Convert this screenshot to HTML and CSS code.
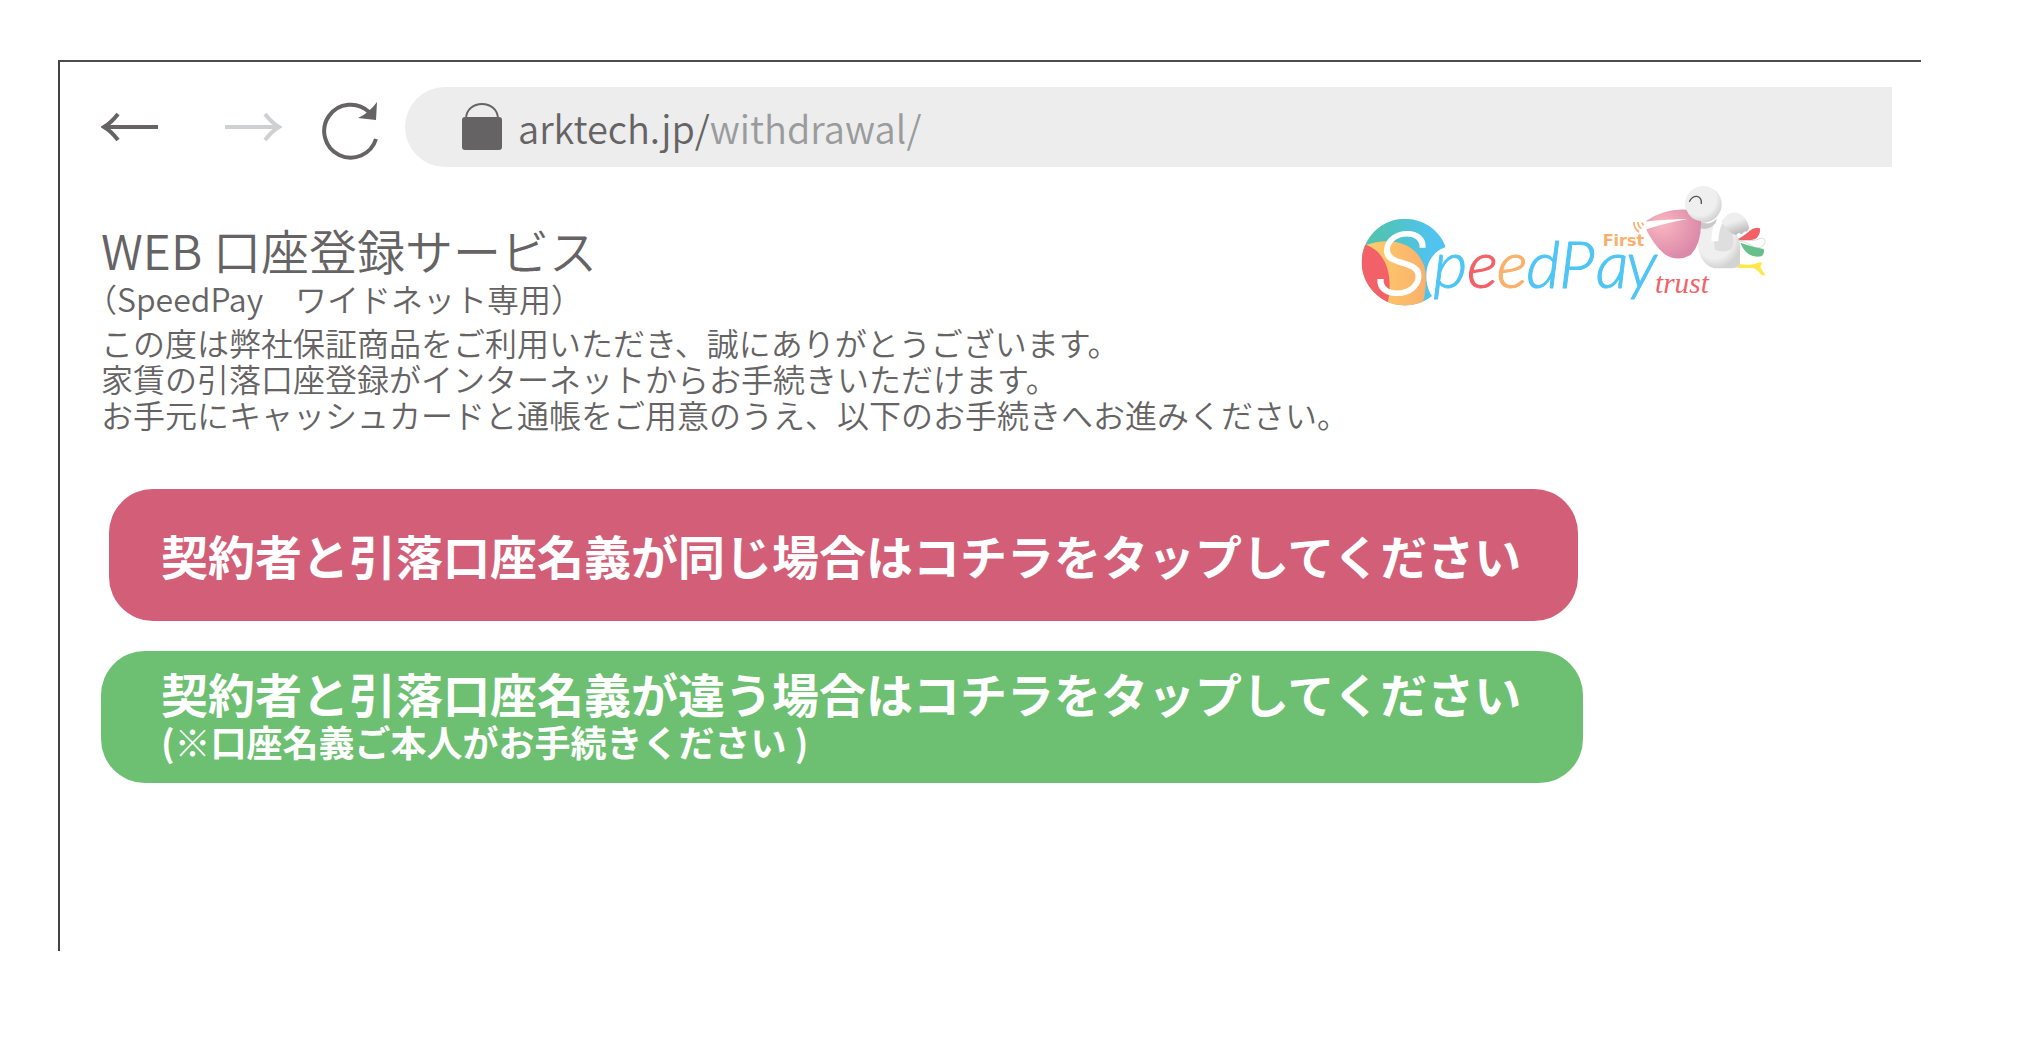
FILE: index.html
```html
<!DOCTYPE html>
<html lang="ja">
<head>
    <meta charset="UTF-8">
    <meta name="viewport" content="width=device-width, initial-scale=1.0">
    <title>WEB口座登録サービス</title>
    <link rel="stylesheet" href="styles.css">
</head>
<body>
    <div class="window">
        <nav class="toolbar">
            <button type="button" class="tool back" aria-label="戻る">
                <svg width="58" height="30" viewBox="0 0 58 30"><path d="M57 15H4M17 2Q10 11 3 15Q10 19 17 28" fill="none" stroke="currentColor" stroke-width="4"/></svg>
            </button>
            <button type="button" class="tool forward" aria-label="進む">
                <svg width="58" height="30" viewBox="0 0 58 30"><path d="M1 15H54M41 2Q48 11 55 15Q48 19 41 28" fill="none" stroke="currentColor" stroke-width="4"/></svg>
            </button>
            <button type="button" class="tool reload" aria-label="再読み込み">
                <svg width="58" height="60" viewBox="0 0 58 60">
                    <path d="M54 39A26.500 26.500 0 1 1 47 12" fill="none" stroke="currentColor" stroke-width="4"/>
                    <path d="M55 2L54 20L36 18Q47 13 55 2Z" fill="currentColor"/>
                </svg>
            </button>
            <div class="address">
                <svg width="42" height="50" viewBox="0 0 42 50">
                    <path d="M5 17C5 -3 37 -3 37 17" fill="none" stroke="currentColor" stroke-width="2"/>
                    <rect x="1" y="15" width="40" height="33" rx="3" fill="currentColor"/>
                </svg>
                <a href="#">arktech.jp/<span class="path">withdrawal/</span></a>
            </div>
        </nav>

        <header class="intro">
            <div class="intro-text">
                <h1>WEB 口座登録サービス</h1>
                <p class="service">（SpeedPay　ワイドネット専用）</p>
                <p class="lead">この度は弊社保証商品をご利用いただき、誠にありがとうございます。<br>
                家賃の引落口座登録がインターネットからお手続きいただけます。<br>
                お手元にキャッシュカードと通帳をご用意のうえ、以下のお手続きへお進みください。</p>
            </div>

            <svg class="logo" viewBox="60 40 1221 381" role="img" aria-label="SpeedPay First trust">
                <defs>
                    <linearGradient id="teal"><stop offset="0.200" stop-color="#50c3b4"/><stop offset="0.800" stop-color="#50c3ee"/></linearGradient>
                    <linearGradient id="sun"><stop offset="0" stop-color="#ffd06a"/><stop offset="1" stop-color="#fab06c"/></linearGradient>
                    <radialGradient id="beak" cx="0.300" cy="0.300" r="0.700"><stop offset="0" stop-color="#fab6c0"/><stop offset="1" stop-color="#dc8aaa"/></radialGradient>
                    <radialGradient id="feather" cx="0.400" cy="0.350" r="0.650"><stop offset="0.700" stop-color="#efefef"/><stop offset="1" stop-color="#d3d3d3"/></radialGradient>
                    <linearGradient id="wing" x1="0" y1="0" x2="0.400" y2="1"><stop offset="0.500" stop-color="#eeeeee"/><stop offset="1" stop-color="#bdbdbd"/></linearGradient>
                    <clipPath id="ball"><path d="M314 232A130 130 0 1 0 273 379C248 345 242 258 314 232Z"/></clipPath>
                </defs>
                <!-- ball -->
                <g clip-path="url(#ball)">
                    <rect x="60" y="145" width="260" height="265" fill="url(#teal)"/>
                    <path d="M60 232C150 195 225 220 250 290Q262 340 243 410H60Z" fill="url(#sun)"/>
                    <path d="M60 222C130 235 162 310 138 410H60Z" fill="#f26168"/>
                </g>
                <text class="initial" x="97" y="377">S</text>
                <!-- name -->
                <g class="name">
                    <text x="277" y="356" fill="#4fc5f5" stroke="#4fc5f5">p</text>
                    <text x="378" y="356" fill="#f26168" stroke="#f26168">e</text>
                    <text x="467" y="356" fill="#fab06c" stroke="#fab06c">e</text>
                    <text x="556" y="356" fill="#4fc5f5" stroke="#4fc5f5">d</text>
                    <text x="654" y="356" fill="#4fc5f5" stroke="#4fc5f5">P</text>
                    <text x="764" y="356" fill="#4fc5f5" stroke="#4fc5f5">a</text>
                    <text x="856" y="356" fill="#4fc5f5" stroke="#4fc5f5">y</text>
                </g>
                <text class="first" x="785" y="230">First</text>
                <text class="trust" x="942" y="369">trust</text>
                <path d="M879 157Q878 176 894 187M891 157Q890 169 901 177M903 158L907 167" fill="none" stroke="#fab06c" stroke-width="5"/>
                <!-- pelican -->
                <path d="M1192 283Q1225 287 1243 283Q1254 276 1263 279Q1262 287 1258 291Q1264 306 1274 317Q1264 320 1257 311Q1245 295 1233 295L1190 295Z" fill="#ffe747"/>
                <path d="M1186 210Q1205 202 1226 183Q1242 170 1257 176Q1259 192 1248 204Q1235 216 1186 210Z" fill="#f26168"/>
                <path d="M1186 211Q1235 218 1262 205Q1276 207 1271 222Q1262 237 1242 234Q1225 220 1186 211Z" fill="#fff" stroke="#ccc" stroke-width="2"/>
                <path d="M1198 219Q1240 233 1268 238Q1272 253 1261 260Q1218 268 1198 219Z" fill="#67c08b"/>
                <path d="M1080 158Q1110 170 1128 148L1165 158Q1200 205 1197 240V283Q1191 296 1172 296H1120C1080 286 1056 235 1080 158Z" fill="url(#feather)"/>
                <path d="M1124 163Q1152 152 1175 190Q1182 225 1171 239Q1148 251 1122 240Q1116 215 1124 163Z" fill="#dedede"/>
                <path d="M1142 154Q1162 125 1187 129Q1216 136 1225 174L1219 185L1210 186L1202 194L1193 190L1184 196Q1155 185 1142 154Z" fill="url(#wing)"/>
                <path d="M1127 145Q1112 170 1111 215H1132Q1133 183 1144 160L1138 128Z" fill="#fff"/>
                <path d="M1080 156Q1108 170 1128 146L1124 160Q1104 183 1078 176Z" fill="#c9c9c9"/>
                <circle cx="1087" cy="104" r="55" fill="url(#feather)"/>
                <path d="M915 154Q970 116 1036 120Q1046 149 1080 155Q1082 222 1049 256Q1009 279 970 253Q936 223 915 178Z" fill="url(#beak)"/>
                <path d="M910 156Q980 149 1040 148Q980 158 912 180Z" fill="#fff"/>
                <path d="M1045 96Q1053 79 1068 80Q1083 83 1081 103" fill="none" stroke="#555" stroke-width="4"/>
            </svg>
        </header>

        <main class="choices">
            <button type="button" class="choice same">契約者と引落口座名義が同じ場合はコチラをタップしてください</button>
            <button type="button" class="choice other">契約者と引落口座名義が違う場合はコチラをタップしてください
                <small>(※口座名義ご本人がお手続きください )</small>
            </button>
        </main>
    </div>
</body>
</html>
```
FILE: styles.css
```css
* {
    box-sizing: border-box;
}
body {
    margin: 0;
    padding: 60px 96px 88px 58px;
    background-color: #fff;
    color: #656364;
    font-family: "Noto Sans CJK JP", sans-serif;
    font-weight: 350;
}
button {
    border: 0;
    font-family: inherit;
    cursor: pointer;
}
.window {
    min-height: calc(100vh - 148px);
    border-top: 2px solid #4c4e4c;
    border-left: 2px solid #434343;
    padding: 25px 29px 0 41px;
}

/* browser bar */
.toolbar {
    display: flex;
    align-items: center;
}
.tool {
    display: flex;
    padding: 0;
    background: none;
    color: #656364;
}
.forward {
    margin: 0 40px 0 65px;
    color: #cfd0d2;
}
.reload {
    margin-right: 25px;
    padding-top: 6px;
}
.address {
    flex: 1;
    display: flex;
    align-items: center;
    gap: 15px;
    height: 80px;
    padding-left: 56px;
    border-radius: 40px 0 0 40px;
    background-color: #ededed;
    font-size: 38px;
}
.address a {
    color: inherit;
    text-decoration: none;
}
.address .path {
    color: #999b9c;
}

/* heading and logo */
.intro {
    display: flex;
    justify-content: space-between;
    padding: 16px 124px 0 0;
}
.intro-text {
    padding-top: 38px;
}
h1 {
    margin: 0 0 3px;
    font-size: 48px;
    font-weight: 350;
    line-height: 56px;
}
.service,
.lead {
    margin: 0;
    font-size: 32px;
    line-height: 36px;
}
.service {
    margin-bottom: 8px;
    text-spacing-trim: trim-start;
}
.logo {
    flex: none;
    width: 407px;
    height: 127px;
    overflow: visible;
}
.logo .initial {
    font-family: Inter, sans-serif;
    font-size: 260px;
    font-style: italic;
    font-weight: 300;
    fill: #fff;
}
.logo .name {
    font-family: Lato, sans-serif;
    font-size: 198px;
    font-style: italic;
    font-weight: 300;
    stroke-width: 3px;
    stroke-linejoin: round;
}
.logo .first {
    font-family: "DejaVu Sans", sans-serif;
    font-size: 48px;
    font-weight: 700;
    fill: #fab06c;
}
.logo .trust {
    font-family: "Liberation Serif", serif;
    font-size: 88px;
    font-style: italic;
    fill: #f26168;
}

/* buttons */
.choices {
    display: grid;
    gap: 30px;
    width: fit-content;
    padding-top: 57px;
}
.choice {
    min-height: 132px;
    padding: 0 60px;
    border-radius: 44px;
    color: #fff;
    font-size: 47px;
    font-weight: 700;
    line-height: 48px;
    text-align: left;
}
.same {
    margin: 0 5px 0 8px;
    padding: 0 52px;
    background-color: #d25f77;
}
.other {
    padding-right: 62px;
    background-color: #6dc071;
}
.choice small {
    display: block;
    font-size: 36px;
}
```
